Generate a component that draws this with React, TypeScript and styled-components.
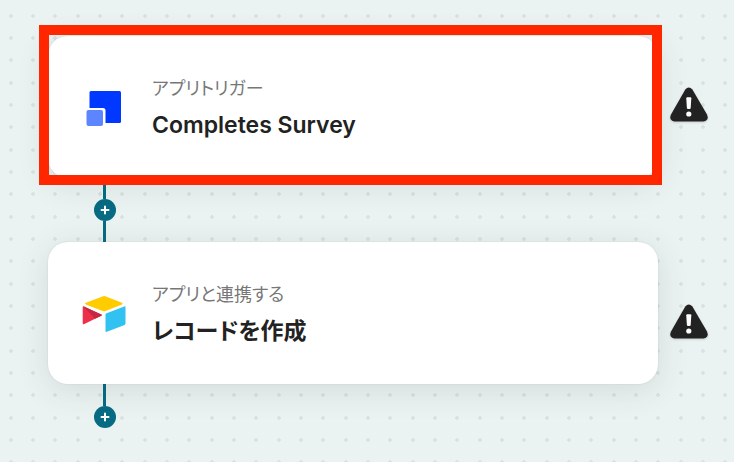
import React from 'react';
import styled, { createGlobalStyle } from 'styled-components';

const dot = 'radial-gradient(circle at 2px 2px, #d9e2e0 1px, #dde5e3 2px, transparent 2px)';
const offsets = [9, 31, 53];
const positions = offsets.flatMap((x) => offsets.map((y) => `${x}px ${y + 5}px`));

const GlobalStyle = createGlobalStyle`
  *, *::before, *::after { box-sizing: border-box; }
  body {
    margin: 0;
    color: #222;
    font-family: Inter, "Noto Sans CJK JP", sans-serif;
    font-optical-sizing: none;
    font-feature-settings: "palt";
  }
`;

/* One 67px tile carries a 3 by 3 group of dots. */
const Canvas = styled.main`
  min-height: 100vh;
  padding: 36px 26px 34px 48px;
  background-color: #eaf3f2;
  background-image: ${positions.map(() => dot).join(', ')};
  background-position: ${positions.join(', ')};
  background-size: 67px 67px;
`;

const StepRow = styled.section`
  display: flex;
  align-items: flex-start;
  gap: 12px;
`;

const Card = styled.article`
  position: relative;
  flex: 1;
  display: flex;
  align-items: center;
  gap: 22px;
  min-height: 142px;
  padding: 18px 34px 16px;
  background: #fff;
  border-radius: 20px;
  box-shadow: 0 0 2px rgba(50, 60, 60, 0.12), 0 6px 32px rgba(50, 60, 60, 0.12);
`;

const Highlight = styled.div`
  position: absolute;
  z-index: 1;
  inset: -11px -4px -7px -9px;
  border: 10px solid #ff2600;
  pointer-events: none;
`;

const AppIcon = styled.svg`
  flex: none;
  width: 48px;
  height: 48px;
`;

const Labels = styled.div`
  display: flex;
  flex-direction: column;
  gap: 8px;
  padding-top: 2px;
`;

const Kind = styled.p`
  margin: 0;
  font-size: 18px;
  line-height: 24px;
  color: #777;
`;

const Title = styled.h2`
  margin: 0;
  font-size: 23px;
  font-weight: 600;
  line-height: 32px;
`;

const WarningIcon = styled.svg<{ $top: number }>`
  flex: none;
  width: 38px;
  height: 36px;
  margin-top: ${(p) => p.$top}px;
  filter: drop-shadow(0 1px 1px rgba(0, 0, 0, 0.15));
`;

const Connector = styled.div`
  display: flex;
  flex-direction: column;
  align-items: flex-start;
  margin-left: 46px;
`;

const Line = styled.span<{ $length: number }>`
  width: 3px;
  height: ${(p) => p.$length}px;
  margin-left: 9px;
  background: #076b83;
`;

const AddButton = styled.button`
  display: grid;
  place-items: center;
  width: 22px;
  height: 22px;
  padding: 0;
  border: 0;
  border-radius: 50%;
  background: #076b83;
  cursor: pointer;
`;

function SurveyLogo() {
  return (
    <AppIcon viewBox="0 0 48 48" aria-hidden="true">
      <rect x="7.500" y="7" width="31.500" height="32" rx="1.500" fill="#0038ff" />
      <path d="M2 24H21Q23.500 24 23.500 26.500V44H2Z" fill="#fff" />
      <rect x="4.500" y="26" width="16.500" height="16" rx="2" fill="#5c85ff" />
    </AppIcon>
  );
}

function RecordLogo() {
  return (
    <AppIcon viewBox="0 0 48 48" aria-hidden="true">
      <path d="M20.500 6.400 3.800 12.800Q2.200 13.600 3.800 14.400L20.600 21Q22 21.500 23.500 21L40 14.400Q41.500 13.600 40 12.800L24 6.500Q22 5.800 20.500 6.400Z" fill="#fc0" />
      <path d="M23.500 24.300V40.900Q23.500 42.300 24.900 41.800L42.600 34.900Q43.500 34.500 43.500 33.600V17.100Q43.500 16 42.300 16.400L24.600 23.200Q23.500 23.500 23.500 24.300Z" fill="#31c2f2" />
      <path d="M.7 17.300V33Q.7 34.800 2.300 34L19.300 25.700Q20.600 25.100 19.300 24.500L2.100 16.400Q.7 15.900.7 17.300Z" fill="#ed3049" />
      <path d="M1.100 16.200 19.300 24.500Q20.600 25.100 19.300 25.700L13 28.800Z" fill="#c62842" />
    </AppIcon>
  );
}

function Warning({ top }: { top: number }) {
  return (
    <WarningIcon $top={top} viewBox="0 0 38 36" role="img" aria-label="警告">
      <path d="M15.300 2.500Q18.700-1.500 22.400 2.500L37 27.500Q39.500 33.500 33.500 34.500H4.500Q-1.500 33.500 1 27.500Z" fill="#222" />
      <path d="M16.300 11.200Q16.300 10.200 17.300 10.200H20.300Q21.300 10.200 21.300 11.200L20.700 21Q20.600 22 19.600 22H18Q17 22 16.900 21Z" fill="#fff" />
      <circle cx="18.800" cy="27" r="2.600" fill="#fff" />
    </WarningIcon>
  );
}

function Add() {
  return (
    <AddButton type="button" aria-label="ステップを追加">
      <svg width="22" height="22" viewBox="0 0 22 22" aria-hidden="true">
        <path d="M11 7.500V14.500M7.500 11H14.500" stroke="#fff" strokeWidth="2" strokeLinecap="round" />
      </svg>
    </AddButton>
  );
}

export default function App() {
  return (
    <>
      <GlobalStyle />
      <Canvas lang="ja">
        <StepRow>
          <Card>
            <SurveyLogo />
            <Labels>
              <Kind>アプリトリガー</Kind>
              <Title>Completes Survey</Title>
            </Labels>
            <Highlight />
          </Card>
          <Warning top={51} />
        </StepRow>
        <Connector>
          <Line $length={21} />
          <Add />
          <Line $length={21} />
        </Connector>
        <StepRow>
          <Card>
            <RecordLogo />
            <Labels>
              <Kind>アプリと連携する</Kind>
              <Title>レコードを作成</Title>
            </Labels>
          </Card>
          <Warning top={62} />
        </StepRow>
        <Connector>
          <Line $length={22} />
          <Add />
        </Connector>
      </Canvas>
    </>
  );
}
